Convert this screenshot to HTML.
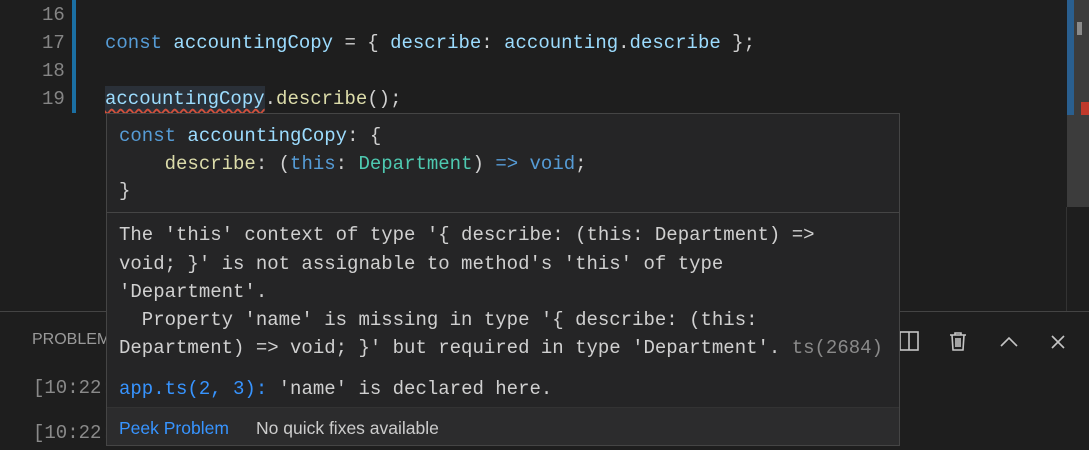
<!DOCTYPE html>
<html><head><style>
body{margin:0;width:1089px;height:450px;background:#1e1e1e;position:relative;overflow:hidden;font-family:"Liberation Mono",monospace;}
.m{position:absolute;font-family:"Liberation Mono",monospace;font-size:19px;white-space:pre;line-height:28px;color:#d0d0d0}
.ln{color:#858585}
.k{color:#569cd6}.v{color:#9cdcfe}.f{color:#dcdcaa}.t{color:#4ec9b0}.g{color:#8a8a8a}
.s{position:absolute;font-family:"Liberation Sans",sans-serif;font-size:17.5px;white-space:pre}
</style></head><body>
<div style="position:absolute;left:72px;top:0;width:4px;height:113px;background:#1b6fa3"></div>
<div class="m ln" style="left:42px;top:1px">16</div>
<div class="m ln" style="left:42px;top:29px">17</div>
<div class="m ln" style="left:42px;top:57px">18</div>
<div class="m ln" style="left:42px;top:85px">19</div>
<div class="m" style="left:105px;top:29px"><span class="k">const</span> <span class="v">accountingCopy</span> = { <span class="v">describe</span>: <span class="v">accounting</span>.<span class="v">describe</span> };</div>
<div style="position:absolute;left:105px;top:86px;width:160px;height:26px;background:#2a3038"></div>
<div class="m" style="left:105px;top:85px"><span class="v" style="text-decoration:underline wavy #d0503c;text-underline-offset:4px">accountingCopy</span>.<span class="f">describe</span>();</div>
<!-- scrollbar -->
<div style="position:absolute;left:1067px;top:0;width:22px;height:207px;background:#3c3c3c"></div>
<div style="position:absolute;left:1067px;top:0;width:7px;height:115px;background:#2a5f8f"></div>
<div style="position:absolute;left:1077px;top:22px;width:5px;height:13px;background:#8a8a8a"></div>
<div style="position:absolute;left:1081px;top:102px;width:8px;height:13px;background:#c0392b"></div>
<div style="position:absolute;left:1066px;top:207px;width:1px;height:104px;background:#333"></div>
<!-- panel -->
<div style="position:absolute;left:0;top:311px;width:1089px;height:1px;background:#444"></div>
<div class="s" style="left:32px;top:331px;font-size:16px;color:#9a9a9a">PROBLEMS</div>
<div class="m" style="left:33px;top:374px;color:#8a8a8a">[10:22:</div>
<div class="m" style="left:33px;top:419px;color:#8a8a8a">[10:22:</div>
<svg style="position:absolute;left:898px;top:328px" width="175" height="26" fill="none" stroke="#c5c5c5" stroke-width="1.6">
<rect x="2" y="4" width="18" height="18"/><line x1="11" y1="4" x2="11" y2="22"/>
<path d="M52 7h16M57 7v-2h6v2M54 7l1 15h10l1-15M58 10v9M60 10v9M62 10v9"/>
<path d="M103 18l8-8 8 8"/>
<path d="M154 8l12 12M166 8l-12 12"/>
</svg>
<!-- hover -->
<div style="position:absolute;left:106px;top:113px;width:792px;height:331px;background:#252526;border:1px solid #454545"></div>
<div style="position:absolute;left:107px;top:212px;width:792px;height:1px;background:#454545"></div>
<div style="position:absolute;left:107px;top:407px;width:792px;height:37px;background:#2c2c2d;border-top:1px solid #333"></div>
<div class="m" style="left:119px;top:122px"><span class="k">const</span> <span class="v">accountingCopy</span>: {</div>
<div class="m" style="left:119px;top:150px">    <span class="f">describe</span>: (<span class="k">this</span>: <span class="t">Department</span>) <span class="k">=&gt;</span> <span class="k">void</span>;</div>
<div class="m" style="left:119px;top:177px">}</div>
<div class="m" style="left:119px;top:221px">The 'this' context of type '{ describe: (this: Department) =&gt;</div>
<div class="m" style="left:119px;top:250px">void; }' is not assignable to method's 'this' of type</div>
<div class="m" style="left:119px;top:278px">'Department'.</div>
<div class="m" style="left:119px;top:306px">  Property 'name' is missing in type '{ describe: (this:</div>
<div class="m" style="left:119px;top:334px">Department) =&gt; void; }' but required in type 'Department'. <span class="g">ts(2684)</span></div>
<div class="m" style="left:119px;top:375px"><span style="color:#3794ff">app.ts(2, 3):</span> 'name' is declared here.</div>
<div class="s" style="left:119px;top:418px;color:#3794ff">Peek Problem</div>
<div class="s" style="left:256px;top:418px;color:#cccccc">No quick fixes available</div>
</body></html>
